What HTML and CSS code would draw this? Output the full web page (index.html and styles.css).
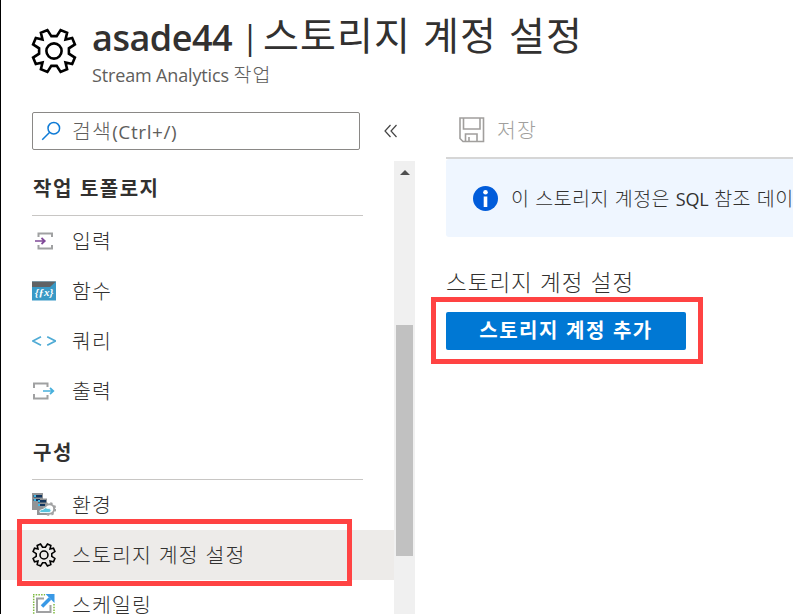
FILE: index.html
```html
<!DOCTYPE html>
<html lang="ko">
<head>
<meta charset="utf-8">
<title>asade44 | 스토리지 계정 설정</title>
<link rel="stylesheet" href="styles.css">
</head>
<body>
<div class="app">
  <header class="header">
    <svg class="header-gear" viewBox="0 0 46 46"><g class="teeth"><path d="M20.3 8.1 16.4 2.1 9.9 4.8 11.5 11.5 4.8 9.9 2.1 16.4 8.1 20.3V25.7L2.1 29.6 4.8 36.1 11.5 34.5 9.9 41.2 16.4 43.9 20.3 37.9H25.7L29.6 43.9 36.1 41.2 34.5 34.5 41.2 36.1 43.9 29.6 37.9 25.7V20.3L43.9 16.4 41.2 9.9 34.5 11.5 36.1 4.8 29.6 2.1 25.7 8.1Z"/><circle cx="23" cy="23" r="7.6"/></g></svg>
    <div class="titles">
      <h1><span class="name">asade44</span><span class="bar">|</span><span class="page">스토리지 계정 설정</span></h1>
      <p><span class="kind">Stream Analytics</span> <span class="job">작업</span></p>
    </div>
  </header>
  <div class="body">
    <aside class="side">
      <div class="search-row">
        <div class="search">
          <svg width="20" height="20" viewBox="0 0 20 20"><g fill="none" stroke="#0f7bd6" stroke-width="1.5"><circle cx="12.8" cy="7.2" r="5.8"/><path d="M8.7 11.3 1.2 18.8"/></g></svg>
          <span>검색<b>(Ctrl+/)</b></span>
        </div>
        <svg class="collapse" width="14" height="14" viewBox="0 0 14 14"><path d="M6.5 1 1 7l5.5 6M12.5 1 7 7l5.5 6" fill="none" stroke="#444" stroke-width="1.2"/></svg>
      </div>
      <div class="scroll">
        <nav class="menu">
          <h2>작업 토폴로지</h2>
          <a class="item"><svg viewBox="0 0 24 24"><path d="M6.5 8V4.500H20V8M20 16v3.500H6.500V16" fill="none" stroke="#a0a1a2" stroke-width="2"/><path d="M3 12h10M9.500 9l3.300 3-3.300 3" fill="none" stroke="#804998" stroke-width="1.7"/></svg><span>입력</span></a>
          <a class="item"><svg viewBox="0 0 24 24"><path fill="#3999c6" d="M0 2.500h24v19H0z"/><path fill="#606264" d="M0 2.500h24L18 8H0z"/><text class="fx" x="12" y="17" text-anchor="middle">{ƒx}</text></svg><span>함수</span></a>
          <a class="item"><svg viewBox="0 0 24 24"><path d="M9 7.800.8 12 9 16.200M15.200 7.800 23.400 12l-8.200 4.200" fill="none" stroke="#4fabd5" stroke-width="1.7"/></svg><span>쿼리</span></a>
          <a class="item"><svg viewBox="0 0 24 24"><path d="M15.500 8V4.500H2V9M15.500 16v3.500H2V15" fill="none" stroke="#a0a1a2" stroke-width="2"/><path d="M11 12h10.500M18 9l3.300 3-3.300 3" fill="none" stroke="#48b0dc" stroke-width="1.7"/></svg><span>출력</span></a>
          <h2 class="second">구성</h2>
          <a class="item"><svg viewBox="0 0 24 24"><path fill="#929496" d="M0 0h11v17H0zM5 5.500h10V22H5z"/><path fill="#12365f" d="M1.500 2h8.500v2.500H1.500zM1.500 6H8v2H1.500zM6 7h8v2.500H6zM6 11h7v2H6z"/><path fill="#3fb8e5" d="M2 2h2v2H2zM2 6h2v2H2zM6 7h2v2H6zM6 11h2v2H6z"/><circle cx="17.500" cy="16" r="4.700" fill="#fff" stroke="#a0a1a2" stroke-width="2"/><circle cx="17.500" cy="16" r="6" fill="none" stroke="#a0a1a2" stroke-width="1.600" stroke-dasharray="2.360 2.360"/><path d="M8 19.500q-1-3 3-3 2-3 5-1 3-.5 3 2t-3 2z" fill="#58c5df" stroke="#e8f7fb"/></svg><span>환경</span></a>
          <a class="item active"><svg class="small-gear" viewBox="0 0 46 46"><g class="teeth"><path d="M20.300 8.100 16.400 2.100 9.900 4.800 11.500 11.500 4.800 9.900 2.100 16.400 8.100 20.300V25.700L2.100 29.600 4.800 36.100 11.500 34.500 9.900 41.200 16.400 43.900 20.300 37.900H25.700L29.600 43.900 36.100 41.200 34.500 34.500 41.200 36.100 43.900 29.600 37.900 25.700V20.300L43.900 16.400 41.200 9.900 34.500 11.500 36.100 4.800 29.600 2.100 25.700 8.100Z"/><circle cx="23" cy="23" r="7.600"/></g></svg><span>스토리지 계정 설정</span><i class="mark mark-menu"></i></a>
          <a class="item"><svg viewBox="0 0 24 24"><path d="M1 1.700h12M1.700 3v21M22 11v13" fill="none" stroke="#7fba42" stroke-width="1.500" stroke-dasharray="1.500 1.200"/><path d="M12 5.500H5V19h13.500v-7" fill="none" stroke="#a0a1a2" stroke-width="2"/><path d="m10 13.500 8-8" stroke="#3999e6" stroke-width="3.500"/><path d="M13.500 1H22.500v9z" fill="#3999e6"/></svg><span>스케일링</span></a>
        </nav>
        <div class="track"><span class="arrow"></span><span class="thumb"></span></div>
      </div>
    </aside>
    <main class="main">
      <div class="toolbar">
        <svg width="26" height="26" viewBox="0 0 26 26"><g fill="none" stroke="#a19f9d" stroke-width="1.6"><path d="M1 1h23.500v23.500H4L1 21.500zM4.500 1v11H21V1M6.500 24.500V17H18v7.500M10 20v4.500"/></g></svg>
        <span>저장</span>
      </div>
      <div class="info">
        <svg width="26" height="26" viewBox="0 0 26 26"><circle cx="13.500" cy="13.500" r="12.500" fill="#015cda"/><circle cx="13.500" cy="7.300" r="2.300" fill="#fff"/><path fill="#fff" d="M11.700 11.500h3.600V22h-3.600z"/></svg>
        <span>이 스토리지 계정은 <b>SQL</b> 참조 데이</span>
      </div>
      <h3>스토리지 계정 설정</h3>
      <div class="action"><button>스토리지 계정 추가</button><i class="mark mark-button"></i></div>
    </main>
  </div>
</div>
</body>
</html>
```

FILE: styles.css
```css
* { box-sizing: border-box; }
body { margin: 0; background: #fff; color: #323130; font-family: "Open Sans", "Noto Sans CJK KR", sans-serif; overflow: hidden; }
h1, h2, h3, p { margin: 0; font-weight: 400; }
b { font-weight: 400; }
.app { width: 793px; height: 614px; overflow: hidden; border-left: 1px solid #000; white-space: nowrap; }
.header { display: flex; height: 112px; padding-left: 30px; }
.header-gear { width: 46px; height: 46px; margin-top: 28px; flex: none; }
.teeth { fill: none; stroke: #000; stroke-width: 2.6; }
.titles { margin-left: 15px; }
h1 { display: flex; height: 61px; line-height: 76px; font-size: 36px; }
.name { width: 149px; font-weight: 600; font-size: 36px; letter-spacing: -.5px; }
.bar { width: 22px; font-size: 33px; line-height: 74px; }
.page { font-family: "Noto Sans CJK KR", sans-serif; font-size: 39px; line-height: 67px; letter-spacing: 1.1px; }
p { color: #605e5c; font-size: 18px; line-height: 26px; }
.kind { letter-spacing: -.15px; }
.job { font-family: "Noto Sans CJK KR", sans-serif; font-size: 19.5px; font-weight: 300; letter-spacing: 1px; }
.body { display: flex; height: 502px; }
.side { width: 414px; flex: none; display: flex; flex-direction: column; }
.search-row { display: flex; height: 49px; padding-left: 31px; }
.search { display: flex; align-items: center; width: 328px; height: 38px; padding: 0 0 3px 8px; border: 1px solid #8a8886; border-radius: 2px; color: #605e5c; font: 300 20.5px "Noto Sans CJK KR", sans-serif; }
.search svg { margin-top: 3px; }
.search span { margin-left: 11px; letter-spacing: 1.2px; }
.search b { font: 400 19px "Open Sans", sans-serif; letter-spacing: .6px; }
.collapse { margin: 12px 0 0 24px; }
.scroll { display: flex; flex: 1; min-height: 0; }
.menu { width: 393px; }
h2 { width: 331px; height: 55px; margin-left: 31px; padding-left: 1px; border-bottom: 1px solid #c8c6c4; font: 700 20px/54px "Noto Sans CJK KR", sans-serif; letter-spacing: 1.5px; }
h2.second { height: 64px; line-height: 72px; }
.item { position: relative; display: flex; align-items: center; height: 50px; padding-left: 31px; font: 300 20.5px "Noto Sans CJK KR", sans-serif; letter-spacing: 1.1px; }
.item svg { width: 24px; height: 24px; margin-right: 16px; }
.item span { padding-bottom: 2px; }
.small-gear .teeth { stroke-width: 3; }
.fx { font: italic 600 11px "Liberation Serif", serif; fill: #fff; letter-spacing: 0; }
.active { background: #edebe9; }
.mark { position: absolute; border: 5px solid #ff4343; }
.mark-menu { left: 16px; top: -11px; width: 335px; height: 67px; }
.track { width: 21px; background: #f0f0f0; display: flex; flex-direction: column; align-items: center; padding-top: 9px; }
.arrow { border: 5px solid transparent; border-top: 0; border-bottom-color: #505050; }
.thumb { width: 17px; height: 231px; margin-top: 150px; background: #c1c1c1; }
.main { flex: 1; min-width: 0; padding-left: 31px; }
.toolbar { display: flex; align-items: center; height: 47px; padding: 0 0 10px 13px; border-bottom: 2px solid #d6d6d6; color: #a19f9d; font: 300 20.5px "Noto Sans CJK KR", sans-serif; letter-spacing: 1.2px; }
.toolbar span { margin-left: 12px; padding-bottom: 1px; }
.info { display: flex; align-items: center; height: 78px; padding-left: 26px; background: #eff6ff; border-radius: 3px 0 0 3px; font: 300 19.5px "Noto Sans CJK KR", sans-serif; letter-spacing: .45px; }
.info svg { flex: none; }
.info span { margin-left: 13px; padding-bottom: 2px; }
.info b { font: 400 18px "Open Sans", sans-serif; letter-spacing: -.3px; }
h3 { margin-top: 28px; height: 47px; font: 300 22.5px/32px "Noto Sans CJK KR", sans-serif; letter-spacing: 1px; }
.action { position: relative; width: 240px; }
button { display: block; width: 240px; height: 38px; padding: 0 0 4px; border: 0; border-radius: 2px; background: #0078d4; color: #fff; font: 700 20px "Noto Sans CJK KR", sans-serif; letter-spacing: 1.5px; }
.mark-button { left: -15px; top: -15px; width: 272px; height: 67px; }
```
